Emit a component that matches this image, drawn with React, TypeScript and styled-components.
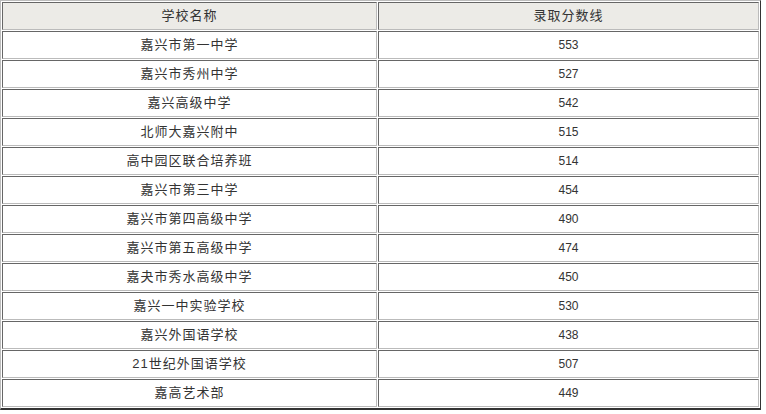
import React from "react";
import styled, { createGlobalStyle } from "styled-components";

const Global = createGlobalStyle`
  html, body { margin: 0; padding: 0; background: #ffffff; }
`;

const Table = styled.table`
  border-collapse: separate;
  border-spacing: 1px;
  border-style: solid;
  border-width: 1px 1px 2px 1px;
  border-color: #bdbdbd #333333 #333333 #bdbdbd;
  table-layout: fixed;
  width: 761px;
  font-family: "Liberation Sans", "Noto Sans CJK SC", sans-serif;
  color: #333333;
`;

const Col = styled.col<{ $w: number }>`
  width: ${(p) => p.$w}px;
`;

const Cell = styled.td<{ $num?: boolean }>`
  height: 26px;
  padding: 0;
  border-style: solid;
  border-width: 1px;
  border-color: #666666 #bbbbbb #bbbbbb #666666;
  background: #ffffff;
  text-align: center;
  vertical-align: middle;
  font-size: ${(p) => (p.$num ? "12px" : "13px")};
  letter-spacing: ${(p) => (p.$num ? "0" : "1px")};
  line-height: 26px;
  white-space: nowrap;
`;

const HeadCell = styled(Cell).attrs({ as: "th" })`
  background: #ecebe7;
  font-weight: normal;
`;

const rows: [string, string][] = [
  ["嘉兴市第一中学", "553"],
  ["嘉兴市秀州中学", "527"],
  ["嘉兴高级中学", "542"],
  ["北师大嘉兴附中", "515"],
  ["高中园区联合培养班", "514"],
  ["嘉兴市第三中学", "454"],
  ["嘉兴市第四高级中学", "490"],
  ["嘉兴市第五高级中学", "474"],
  ["嘉夬市秀水高级中学", "450"],
  ["嘉兴一中实验学校", "530"],
  ["嘉兴外国语学校", "438"],
  ["21世纪外国语学校", "507"],
  ["嘉高艺术部", "449"],
];

export default function App() {
  return (
    <>
      <Global />
      <Table>
        <colgroup>
          <Col $w={373} />
          <Col $w={379} />
        </colgroup>
        <thead>
          <tr>
            <HeadCell>学校名称</HeadCell>
            <HeadCell>录取分数线</HeadCell>
          </tr>
        </thead>
        <tbody>
          {rows.map(([name, score]) => (
            <tr key={name}>
              <Cell>{name}</Cell>
              <Cell $num>{score}</Cell>
            </tr>
          ))}
        </tbody>
      </Table>
    </>
  );
}
